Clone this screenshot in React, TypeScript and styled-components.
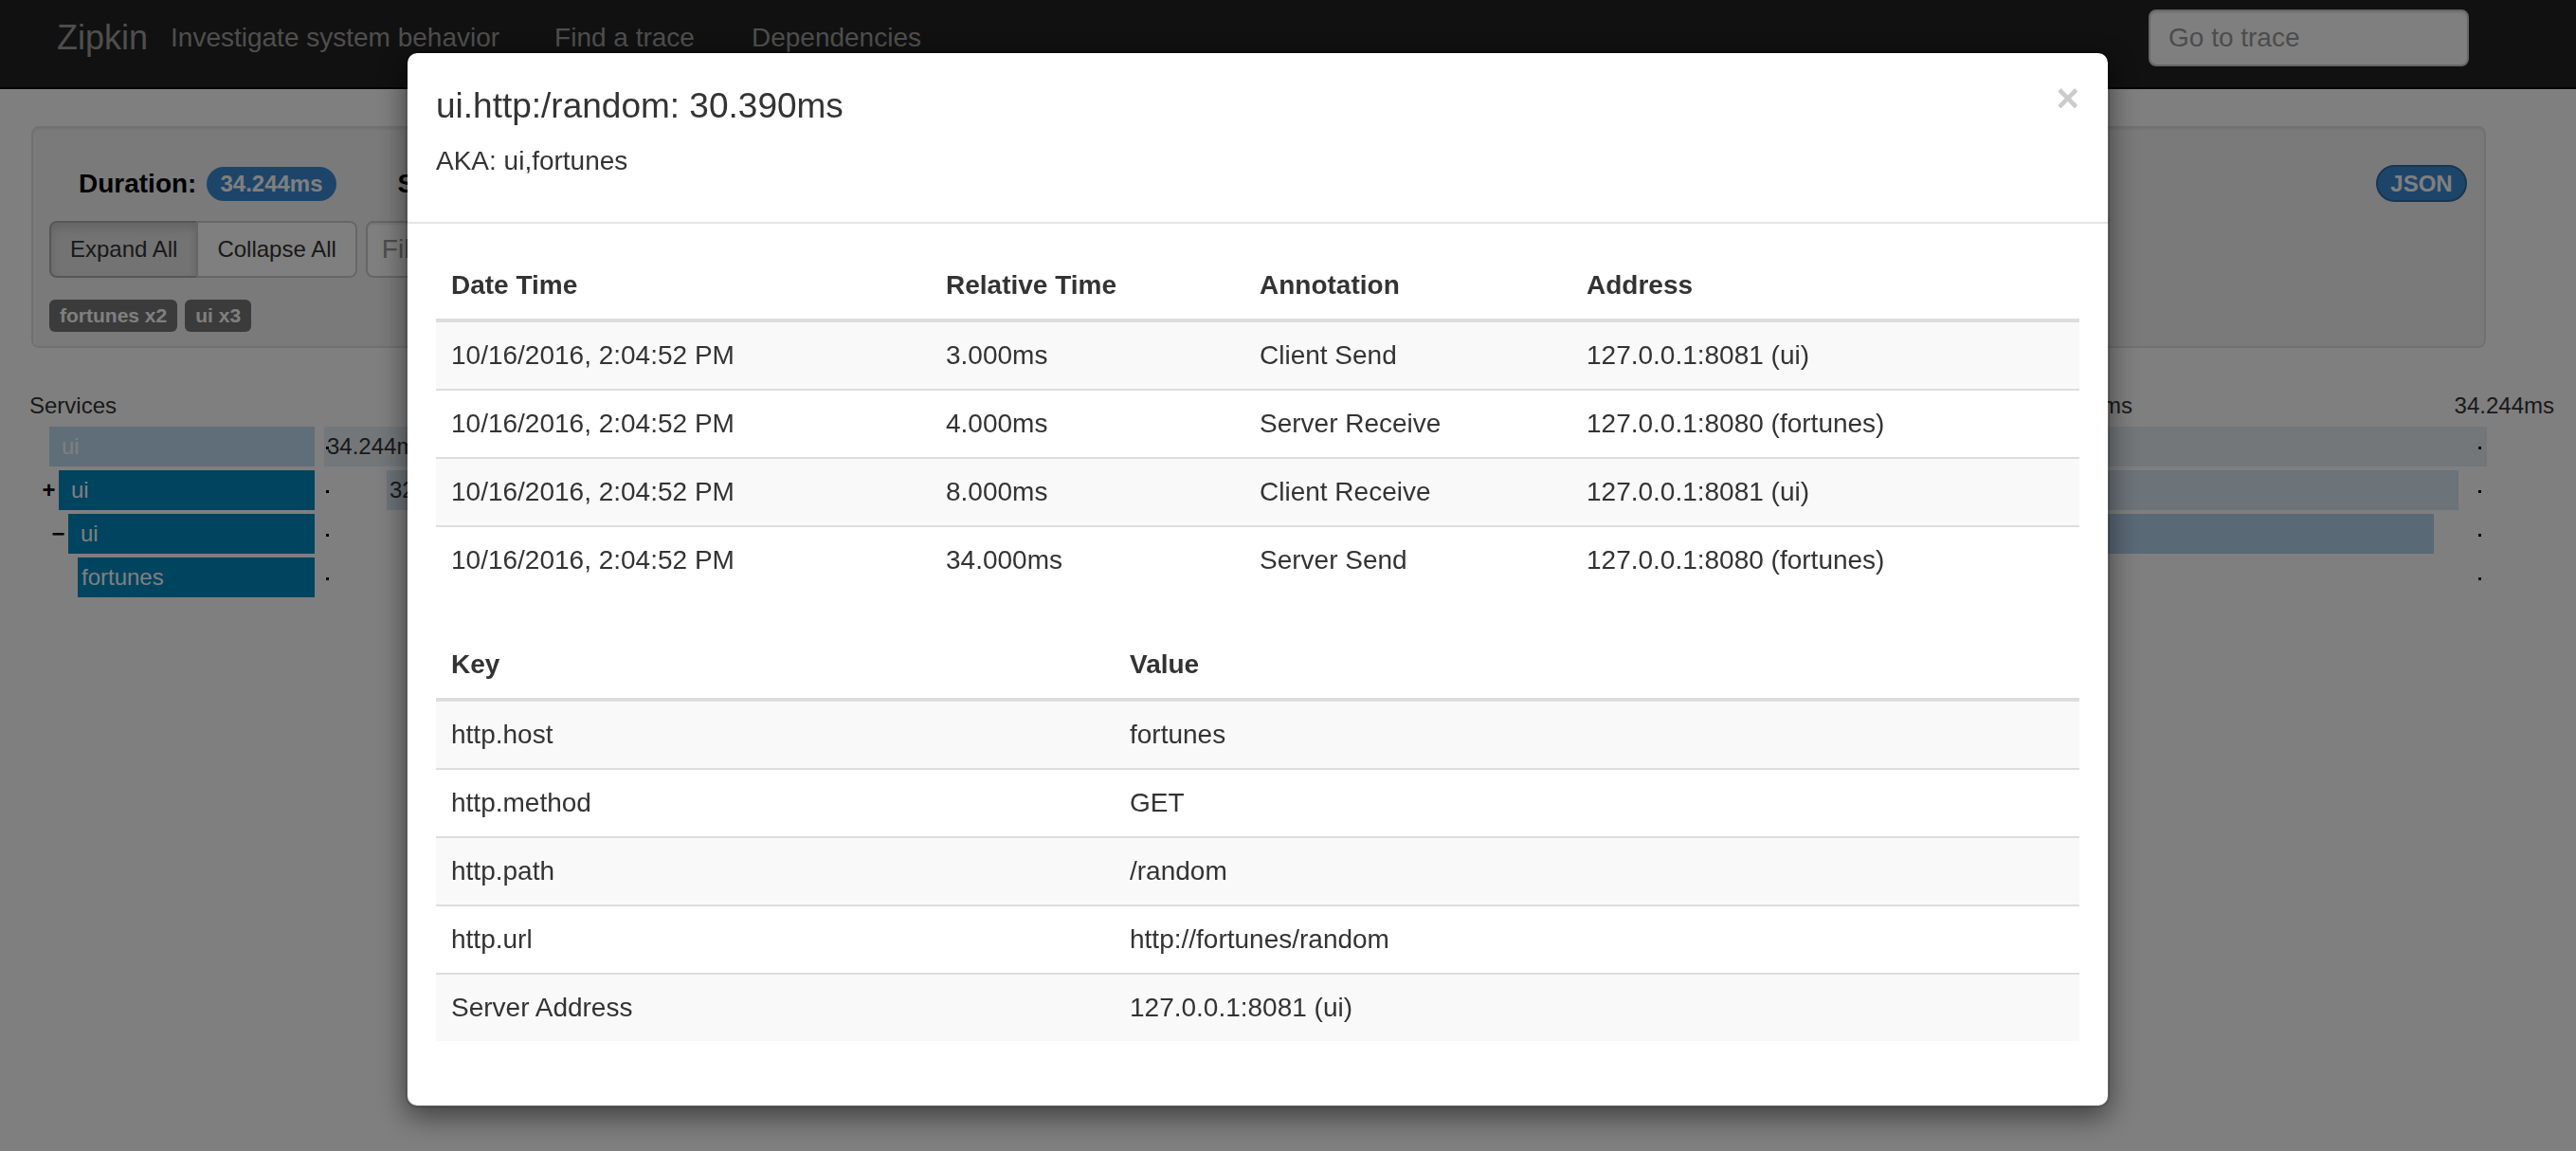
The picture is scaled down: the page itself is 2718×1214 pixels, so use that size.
import React from "react";
import styled, { createGlobalStyle } from "styled-components";

const GlobalStyle = createGlobalStyle`
  *, *::before, *::after { box-sizing: border-box; }
  html, body { margin: 0; padding: 0; }
  body {
    background: #ffffff;
    color: #333333;
    font-family: "Liberation Sans", Arial, Helvetica, sans-serif;
    width: 2718px;
    height: 1214px;
    overflow: hidden;
  }
`;

/* ---------- Navbar ---------- */
const Navbar = styled.header`
  height: 94px;
  background: #222222;
  border-bottom: 2px solid #080808;
  display: flex;
  align-items: center;
  padding: 0 113px 12px 60px;
`;

const Brand = styled.span`
  font-size: 36px;
  color: #9d9d9d;
  margin-right: 24px;
`;

const Tagline = styled.span`
  font-size: 28px;
  color: #9d9d9d;
  margin-right: 58px;
`;

const NavLink = styled.span`
  font-size: 28px;
  color: #9d9d9d;
  margin-right: 60px;
`;

const Spacer = styled.div`
  flex: 1;
`;

const TraceSearch = styled.input`
  width: 338px;
  height: 60px;
  border: 2px solid #cccccc;
  border-radius: 8px;
  background: #ffffff;
  padding: 0 19px;
  font-family: inherit;
  font-size: 28px;
  color: #555;
  box-shadow: inset 0 2px 2px rgba(0, 0, 0, 0.075);
  &::placeholder { color: #999999; }
`;

/* ---------- Trace summary well ---------- */
const Main = styled.main`
  padding-top: 39px;
`;

const Well = styled.section`
  margin: 0 95px 0 33px;
  background: #f5f5f5;
  border: 2px solid #e3e3e3;
  border-radius: 8px;
  box-shadow: inset 0 2px 2px rgba(0, 0, 0, 0.05);
  padding: 39px 18px 15px 17px;
`;

const SummaryRow = styled.div`
  display: flex;
  align-items: center;
  justify-content: space-between;
  height: 39px;
`;

const SummaryGroup = styled.div`
  display: flex;
  align-items: center;
  gap: 65px;
  padding-left: 31px;
`;

const SummaryItem = styled.div`
  display: flex;
  align-items: center;
  gap: 11px;
`;

const SummaryLabel = styled.span`
  font-size: 28px;
  font-weight: bold;
  color: #000000;
`;

const Badge = styled.span`
  display: inline-flex;
  align-items: center;
  height: 36px;
  padding: 0 14px;
  border-radius: 18px;
  background: #3b8bd4;
  color: #ffffff;
  font-size: 24px;
  font-weight: bold;
`;

const JsonButton = styled.span`
  display: inline-flex;
  align-items: center;
  justify-content: center;
  height: 39px;
  width: 96px;
  border: 2px solid #2e6da4;
  border-radius: 20px;
  background: #3b8bd4;
  color: #ffffff;
  font-size: 24px;
  font-weight: bold;
`;

const Controls = styled.div`
  display: flex;
  align-items: center;
  margin-top: 20px;
`;

const ButtonGroup = styled.div`
  display: flex;
`;

const GroupButton = styled.button<{ $active?: boolean; $first?: boolean }>`
  height: 60px;
  padding: 0 20px;
  font-family: inherit;
  font-size: 24px;
  color: #333333;
  background: ${(p) => (p.$active ? "#e6e6e6" : "#ffffff")};
  border: 2px solid ${(p) => (p.$active ? "#adadad" : "#cccccc")};
  box-shadow: ${(p) => (p.$active ? "inset 0 6px 10px rgba(0,0,0,0.125)" : "none")};
  border-radius: ${(p) => (p.$first ? "8px 0 0 8px" : "0 8px 8px 0")};
  margin-left: ${(p) => (p.$first ? "0" : "-2px")};
`;

const FilterInput = styled.input`
  margin-left: 9px;
  width: 420px;
  height: 60px;
  border: 2px solid #cccccc;
  border-radius: 8px;
  padding: 0 15px;
  font-family: inherit;
  font-size: 28px;
  box-shadow: inset 0 2px 2px rgba(0, 0, 0, 0.075);
  &::placeholder { color: #999999; }
`;

const ServiceTags = styled.div`
  display: flex;
  gap: 8px;
  margin-top: 23px;
`;

const ServiceTag = styled.span`
  display: inline-flex;
  align-items: center;
  height: 34px;
  padding: 0 11px;
  border-radius: 6px;
  background: #777777;
  color: #ffffff;
  font-size: 21px;
  font-weight: bold;
`;

/* ---------- Trace timeline ---------- */
const Trace = styled.section`
  margin-top: 43px;
  padding: 0 23px 0 31px;
  font-size: 24px;
  color: #333333;
`;

const TraceHeader = styled.div`
  display: flex;
  height: 36px;
  line-height: 36px;
`;

const ServicesHeading = styled.div`
  width: 311px;
  flex: none;
`;

const Ticks = styled.div`
  flex: 1;
  padding-left: 128px;
  display: grid;
  grid-template-columns: repeat(5, 1fr);
`;

const Tick = styled.span`
  text-align: right;
`;

const SpanRow = styled.div`
  display: flex;
  height: 42px;
  margin-top: 4px;
`;

const ServiceCell = styled.div<{ $depth: number }>`
  width: 301px;
  flex: none;
  display: flex;
  padding-left: ${(p) => p.$depth * 10}px;
`;

const Expander = styled.span<{ $color: string }>`
  width: 21px;
  flex: none;
  text-align: center;
  line-height: 42px;
  font-size: 24px;
  font-weight: bold;
  color: ${(p) => p.$color};
`;

const ServiceName = styled.div<{ $bg: string; $leaf?: boolean }>`
  flex: 1;
  background: ${(p) => p.$bg};
  color: #ffffff;
  line-height: 42px;
  padding-left: ${(p) => (p.$leaf ? 4 : 13)}px;
`;

const Timeline = styled.div`
  flex: 0 0 2282px;
  margin-left: 10px;
  position: relative;
`;

const Bar = styled.div<{ $bg: string }>`
  position: absolute;
  top: 0;
  bottom: 0;
  background: ${(p) => p.$bg};
  line-height: 42px;
  padding-left: 3px;
  white-space: nowrap;
  overflow: hidden;
  color: #333333;
`;

const Marker = styled.span<{ $side: "start" | "end" }>`
  position: absolute;
  top: 21px;
  width: 3px;
  height: 3px;
  background: #000000;
  ${(p) => (p.$side === "start" ? "left: 2px;" : "right: 6px;")}
`;

/* ---------- Modal ---------- */
const Backdrop = styled.div`
  position: fixed;
  top: 0;
  left: 0;
  width: 100%;
  height: 100%;
  z-index: 1040;
  background: #000000;
  opacity: 0.5;
`;

const ModalLayer = styled.div`
  position: fixed;
  top: 0;
  left: 0;
  width: 100%;
  height: 100%;
  z-index: 1050;
  display: flex;
  justify-content: center;
  align-items: flex-start;
  padding: 54px 64px 0 0;
`;

const Dialog = styled.div`
  width: 1798px;
  background: #ffffff;
  background-clip: padding-box;
  border: 2px solid rgba(0, 0, 0, 0.2);
  border-radius: 12px;
  box-shadow: 0 10px 30px rgba(0, 0, 0, 0.5);
  color: #333333;
`;

const ModalHeader = styled.div`
  display: flex;
  justify-content: space-between;
  align-items: flex-start;
  padding: 30px 30px 44px 30px;
  border-bottom: 2px solid #e5e5e5;
`;

const TitleBlock = styled.div`
  display: flex;
  flex-direction: column;
`;

const ModalTitle = styled.h4`
  margin: 0;
  font-size: 37px;
  font-weight: 500;
  line-height: 51px;
`;

const Aka = styled.h5`
  margin: 13px 0 0;
  font-size: 28px;
  font-weight: 500;
  line-height: 40px;
`;

const CloseButton = styled.button`
  border: 0;
  background: transparent;
  padding: 0;
  margin-top: -3px;
  font-family: inherit;
  font-size: 42px;
  font-weight: bold;
  line-height: 1;
  color: #000000;
  opacity: 0.2;
`;

const ModalBody = styled.div`
  padding: 30px 30px 28px;
`;

const DataTable = styled.table`
  width: 100%;
  border-collapse: separate;
  border-spacing: 0;
  margin-bottom: 40px;
  font-size: 28px;
`;

const HeadCell = styled.th<{ $width?: number }>`
  text-align: left;
  font-weight: bold;
  padding: 15px 16px;
  line-height: 40px;
  border-bottom: 4px solid #dddddd;
  vertical-align: bottom;
  width: ${(p) => (p.$width ? `${p.$width}px` : "auto")};
`;

const BodyRow = styled.tr`
  &:nth-child(odd) { background: #f9f9f9; }
  &:not(:first-child) > td { border-top: 2px solid #dddddd; }
`;

const Cell = styled.td`
  padding: 15px 16px;
  line-height: 40px;
  vertical-align: top;
`;

/* ---------- Data ---------- */
type SpanData = {
  service: string;
  depth: number;
  expander: string;
  expanderColor: string;
  nameBg: string;
  leaf?: boolean;
  barLeft: number;
  barWidth: number;
  barBg: string;
  label: string;
};

const spans: SpanData[] = [
  { service: "ui", depth: 0, expander: "+", expanderColor: "#ffffff", nameBg: "#bedcf0", barLeft: 0, barWidth: 100, barBg: "#e6eef5", label: "34.244ms" },
  { service: "ui", depth: 1, expander: "+", expanderColor: "#000000", nameBg: "#0088be", barLeft: 2.89, barWidth: 95.79, barBg: "#d8e6f2", label: "32.013ms" },
  { service: "ui", depth: 2, expander: "−", expanderColor: "#000000", nameBg: "#0088be", barLeft: 5.2, barWidth: 92.34, barBg: "#b4d2ec", label: "30.390ms" },
  { service: "fortunes", depth: 3, expander: "", expanderColor: "#000000", nameBg: "#0088be", leaf: true, barLeft: 8.8, barWidth: 70, barBg: "#b4d2ec", label: "27.000ms" },
];

const ticks = ["6.849ms", "13.698ms", "20.546ms", "27.395ms", "34.244ms"];

const annotations = [
  ["10/16/2016, 2:04:52 PM", "3.000ms", "Client Send", "127.0.0.1:8081 (ui)"],
  ["10/16/2016, 2:04:52 PM", "4.000ms", "Server Receive", "127.0.0.1:8080 (fortunes)"],
  ["10/16/2016, 2:04:52 PM", "8.000ms", "Client Receive", "127.0.0.1:8081 (ui)"],
  ["10/16/2016, 2:04:52 PM", "34.000ms", "Server Send", "127.0.0.1:8080 (fortunes)"],
];

const tags = [
  ["http.host", "fortunes"],
  ["http.method", "GET"],
  ["http.path", "/random"],
  ["http.url", "http://fortunes/random"],
  ["Server Address", "127.0.0.1:8081 (ui)"],
];

export default function App() {
  return (
    <>
      <GlobalStyle />
      <Navbar>
        <Brand>Zipkin</Brand>
        <Tagline>Investigate system behavior</Tagline>
        <NavLink>Find a trace</NavLink>
        <NavLink>Dependencies</NavLink>
        <Spacer />
        <TraceSearch placeholder="Go to trace" />
      </Navbar>

      <Main>
        <Well>
          <SummaryRow>
            <SummaryGroup>
              <SummaryItem>
                <SummaryLabel>Duration:</SummaryLabel>
                <Badge>34.244ms</Badge>
              </SummaryItem>
              <SummaryItem>
                <SummaryLabel>Services:</SummaryLabel>
                <Badge>2</Badge>
              </SummaryItem>
              <SummaryItem>
                <SummaryLabel>Depth:</SummaryLabel>
                <Badge>3</Badge>
              </SummaryItem>
              <SummaryItem>
                <SummaryLabel>Total Spans:</SummaryLabel>
                <Badge>4</Badge>
              </SummaryItem>
            </SummaryGroup>
            <JsonButton>JSON</JsonButton>
          </SummaryRow>
          <Controls>
            <ButtonGroup>
              <GroupButton $active $first>Expand All</GroupButton>
              <GroupButton>Collapse All</GroupButton>
            </ButtonGroup>
            <FilterInput placeholder="Filter Service..." />
          </Controls>
          <ServiceTags>
            <ServiceTag>fortunes x2</ServiceTag>
            <ServiceTag>ui x3</ServiceTag>
          </ServiceTags>
        </Well>

        <Trace>
          <TraceHeader>
            <ServicesHeading>Services</ServicesHeading>
            <Ticks>
              {ticks.map((t) => (
                <Tick key={t}>{t}</Tick>
              ))}
            </Ticks>
          </TraceHeader>
          {spans.map((s, i) => (
            <SpanRow key={i}>
              <ServiceCell $depth={s.depth}>
                <Expander $color={s.expanderColor}>{s.expander}</Expander>
                <ServiceName $bg={s.nameBg} $leaf={s.leaf}>
                  {s.service}
                </ServiceName>
              </ServiceCell>
              <Timeline>
                <Bar $bg={s.barBg} style={{ left: `${s.barLeft}%`, width: `${s.barWidth}%` }}>
                  {s.label}
                </Bar>
                <Marker $side="start" />
                <Marker $side="end" />
              </Timeline>
            </SpanRow>
          ))}
        </Trace>
      </Main>

      <Backdrop />
      <ModalLayer>
        <Dialog>
          <ModalHeader>
            <TitleBlock>
              <ModalTitle>ui.http:/random: 30.390ms</ModalTitle>
              <Aka>AKA: ui,fortunes</Aka>
            </TitleBlock>
            <CloseButton aria-label="Close">×</CloseButton>
          </ModalHeader>
          <ModalBody>
            <DataTable>
              <thead>
                <tr>
                  <HeadCell $width={522}>Date Time</HeadCell>
                  <HeadCell $width={331}>Relative Time</HeadCell>
                  <HeadCell $width={345}>Annotation</HeadCell>
                  <HeadCell>Address</HeadCell>
                </tr>
              </thead>
              <tbody>
                {annotations.map((row, i) => (
                  <BodyRow key={i}>
                    {row.map((c, j) => (
                      <Cell key={j}>{c}</Cell>
                    ))}
                  </BodyRow>
                ))}
              </tbody>
            </DataTable>
            <DataTable>
              <thead>
                <tr>
                  <HeadCell $width={716}>Key</HeadCell>
                  <HeadCell>Value</HeadCell>
                </tr>
              </thead>
              <tbody>
                {tags.map((row, i) => (
                  <BodyRow key={i}>
                    {row.map((c, j) => (
                      <Cell key={j}>{c}</Cell>
                    ))}
                  </BodyRow>
                ))}
              </tbody>
            </DataTable>
          </ModalBody>
        </Dialog>
      </ModalLayer>
    </>
  );
}
